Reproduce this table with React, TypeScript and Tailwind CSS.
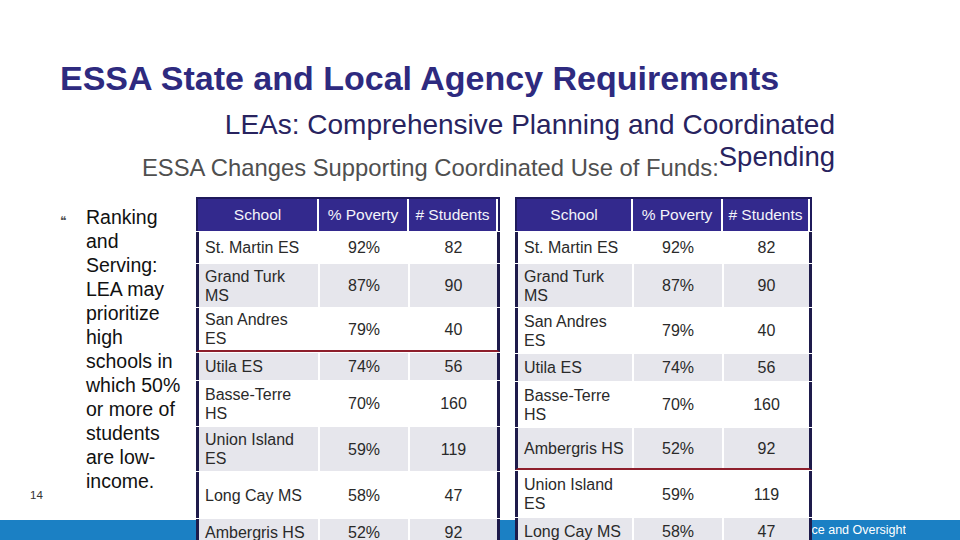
const rowsA = [
  { school: "St. Martin ES", poverty: "92%", students: "82", h: "h-[31px]" },
  { school: "Grand Turk MS", poverty: "87%", students: "90", h: "h-[43px]" },
  { school: "San Andres ES", poverty: "79%", students: "40", h: "h-[44px]", cut: true },
  { school: "Utila ES", poverty: "74%", students: "56", h: "h-[27px]" },
  { school: "Basse-Terre HS", poverty: "70%", students: "160", h: "h-[45px]" },
  { school: "Union Island ES", poverty: "59%", students: "119", h: "h-[44px]" },
  { school: "Long Cay MS", poverty: "58%", students: "47", h: "h-[46px]" },
  { school: "Ambergris HS", poverty: "52%", students: "92", h: "h-[26px]" },
]

const rowsB = [
  { school: "St. Martin ES", poverty: "92%", students: "82", h: "h-[31px]" },
  { school: "Grand Turk MS", poverty: "87%", students: "90", h: "h-[43px]" },
  { school: "San Andres ES", poverty: "79%", students: "40", h: "h-[45px]" },
  { school: "Utila ES", poverty: "74%", students: "56", h: "h-[27px]" },
  { school: "Basse-Terre HS", poverty: "70%", students: "160", h: "h-[45px]" },
  { school: "Ambergris HS", poverty: "52%", students: "92", h: "h-[42px]", cut: true },
  { school: "Union Island ES", poverty: "59%", students: "119", h: "h-[46px]" },
  { school: "Long Cay MS", poverty: "58%", students: "47", h: "h-[26px]" },
]

type Row = { school: string; poverty: string; students: string; h: string; cut?: boolean }

function SchoolTable({ rows, cols }: { rows: Row[]; cols: string }) {
  return (
    <div className="flex flex-col gap-px bg-white">
      <div className={`grid ${cols} gap-x-[2px] h-[34px] border-t-2 border-x-[2px] border-[#1f1a5c] bg-white`}>
        {["School", "% Poverty", "# Students"].map((t) => (
          <div key={t} className="bg-[#33298d] text-[#f4f4fa] flex items-center justify-center text-[15.5px]">
            {t}
          </div>
        ))}
      </div>
      {rows.map((r, i) => {
        const cell = i % 2 === 1 ? "bg-[#e6e6ec]" : "bg-white"
        return (
          <div
            key={r.school}
            className={`grid ${cols} gap-x-[2px] ${r.h} border-x-[3px] border-[#1e1b4b] ${r.cut ? "border-b-2 border-b-[#8e1f2c]" : ""} bg-white text-[16px] leading-[19px] text-[#2a2a2a]`}
          >
            <div className={`${cell} flex items-center px-[6px]`}>{r.school}</div>
            <div className={`${cell} flex items-center justify-center`}>{r.poverty}</div>
            <div className={`${cell} flex items-center justify-center`}>{r.students}</div>
          </div>
        )
      })}
    </div>
  )
}

export default function App() {
  return (
    <div className="relative w-[960px] h-[540px] overflow-hidden bg-white font-['Liberation_Sans',Arial,sans-serif]">
      <div className="absolute left-0 right-0 bottom-0 h-[20px] bg-[#1b80c4] flex items-center justify-end pr-[54px]">
        <div className="w-[96px] overflow-hidden flex justify-end whitespace-nowrap text-[12.5px] text-white">
          Office of Compliance and Oversight
        </div>
      </div>

      <h1 className="pl-[60px] pt-[59px] text-[34px] leading-[38px] font-bold text-[#2e2a7f] whitespace-nowrap">
        ESSA State and Local Agency Requirements
      </h1>
      <div className="pr-[125px] mt-[12px] text-right text-[28px] leading-[32px] text-[#28235f] whitespace-nowrap">
        LEAs: Comprehensive Planning and Coordinated
      </div>
      <div className="pr-[125px] mt-[0px] h-[31px] text-right leading-[32px] whitespace-nowrap">
        <span className="text-[23.8px] text-[#4f4f4f]">ESSA Changes Supporting Coordinated Use of Funds:</span>
        <span className="text-[27.5px] text-[#28235f] align-[10px]">Spending</span>
      </div>

      <div className="relative z-10 flex mt-[25px] h-[343px]">
        <div className="w-[196px] flex shrink-0">
          <div className="w-[60px] flex flex-col justify-end pl-[30px] pb-[36px] text-[11.5px] text-[#333]">14</div>
          <div className="w-[26px] pt-[18px] text-[12px] text-[#555] leading-none">❝</div>
          <p className="w-[100px] mt-[8px] text-[19.5px] leading-[24px] text-[#111]">
            Ranking and Serving: LEA may prioritize high schools in which 50% or more of students are low-income.
          </p>
        </div>
        <div className="flex gap-[15px]">
          <div className="w-[304px]">
            <SchoolTable rows={rowsA} cols="grid-cols-[119px_88px_87px]" />
          </div>
          <div className="w-[297px]">
            <SchoolTable rows={rowsB} cols="grid-cols-[114px_88px_85px]" />
          </div>
        </div>
      </div>
    </div>
  )
}
